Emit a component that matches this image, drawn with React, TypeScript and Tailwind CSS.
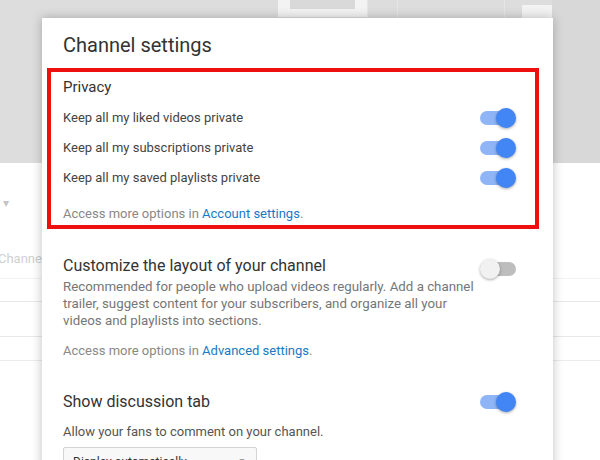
import React from 'react';

function Toggle({ on }: { on: boolean }) {
  return (
    <div className="relative w-[36px] h-[20px] shrink-0">
      <div
        className={
          on
            ? 'absolute left-0 right-[4px] top-[3px] h-[14px] rounded-full bg-[#8fb5f7]'
            : 'absolute left-[4px] right-0 top-[3px] h-[14px] rounded-full bg-[#bdbdbd]'
        }
      />
      <div
        className={
          on
            ? 'absolute right-0 top-0 w-[20px] h-[20px] rounded-full bg-[#4285f4] shadow-[0_1px_3px_rgba(0,0,0,0.35)]'
            : 'absolute left-0 top-0 w-[20px] h-[20px] rounded-full bg-[#f1f1f1] shadow-[0_1px_3px_rgba(0,0,0,0.35)]'
        }
      />
    </div>
  );
}

const privacyRows = [
  'Keep all my liked videos private',
  'Keep all my subscriptions private',
  'Keep all my saved playlists private',
];

export default function App() {
  return (
    <div
      className="relative w-[600px] h-[460px] overflow-hidden bg-white"
      style={{ fontFamily: 'Roboto, "Liberation Sans", sans-serif' }}
    >
      {/* page behind the dialog */}
      <div className="flex h-[163px] bg-[#dddddd]">
        <div className="w-[278px]" />
        <div className="w-[89px] h-[17px] bg-[#f3f3f3] flex justify-center">
          <div className="w-[65px] h-[9px] bg-[#d9d9d9]" />
        </div>
        <div className="w-[30px] border-l border-[#e6e6e6]" />
        <div className="w-[107px] border-l border-[#e6e6e6]" />
        <div className="w-[18px] border-l border-[#e6e6e6]" />
        <div className="w-[30px] pt-[5px]">
          <div className="h-[13px] bg-[#f3f3f3]" />
        </div>
        <div className="flex-1 bg-[#d8d8d8]" />
      </div>
      <div className="h-[30px]" />
      <div className="text-[12px] leading-[20px] text-[#c4c4c4] -ml-[4px]">r ▾</div>
      <div className="h-[36px]" />
      <div className="text-[13px] leading-[20px] text-[#d0d0d0] -ml-[2px]">Channel</div>
      <div className="h-[10px] border-b border-[#f3f3f3]" />
      <div className="h-[23px] border-b border-[#e8e8e8]" />
      <div className="h-[35px] border-b border-[#e8e8e8]" />
      <div className="h-[24px] border-b border-[#ececec]" />

      {/* dialog */}
      <div className="absolute left-[42px] top-[18px] w-[511px] h-[600px] bg-white shadow-[0_0_10px_rgba(0,0,0,0.25)]">
        <div className="pl-[21px] pt-[15px] text-[20px] leading-[24px] text-[#333333]">
          Channel settings
        </div>

        <div className="mt-[11px] ml-[5px] mr-[14px] border-4 border-[#ee0f0f] pl-[12px] pr-[19px] pt-[5px] pb-[2px]">
          <div className="text-[15px] leading-[20px] text-[#333333]">Privacy</div>
          <div className="mt-[6px]">
            {privacyRows.map((label) => (
              <div key={label} className="flex items-center justify-between h-[30px]">
                <span className="text-[13px] text-[#444444]">{label}</span>
                <Toggle on />
              </div>
            ))}
          </div>
          <div className="mt-[12px] text-[13px] leading-[18px] text-[#888888]">
            Access more options in <span className="text-[#167ac6]">Account settings</span>.
          </div>
        </div>

        <div className="pl-[21px] pr-[37px] mt-[26px]">
          <div className="flex items-center justify-between h-[22px]">
            <span className="text-[16px] text-[#333333]">Customize the layout of your channel</span>
            <div className="mt-[6px]">
              <Toggle on={false} />
            </div>
          </div>
          <p className="mt-[1px] text-[13.3px] leading-[17px] text-[#767676] whitespace-nowrap">
            Recommended for people who upload videos regularly. Add a channel
            <br />
            trailer, suggest content for your subscribers, and organize all your
            <br />
            videos and playlists into sections.
          </p>
          <div className="mt-[13px] text-[13px] leading-[18px] text-[#888888]">
            Access more options in <span className="text-[#167ac6]">Advanced settings</span>.
          </div>

          <div className="mt-[31px] flex items-center justify-between h-[22px]">
            <span className="text-[16px] text-[#333333]">Show discussion tab</span>
            <Toggle on />
          </div>
          <div className="mt-[10px] text-[13px] leading-[18px] text-[#555555]">
            Allow your fans to comment on your channel.
          </div>
          <div className="mt-[6px] w-[194px] h-[30px] border border-[#d3d3d3] bg-[#f8f8f8] rounded-[2px] flex items-center justify-between pl-[9px] pr-[10px]">
            <span className="text-[12px] text-[#333333]">Display automatically</span>
            <span className="text-[8px] text-[#555555]">▼</span>
          </div>
        </div>
      </div>
    </div>
  );
}
